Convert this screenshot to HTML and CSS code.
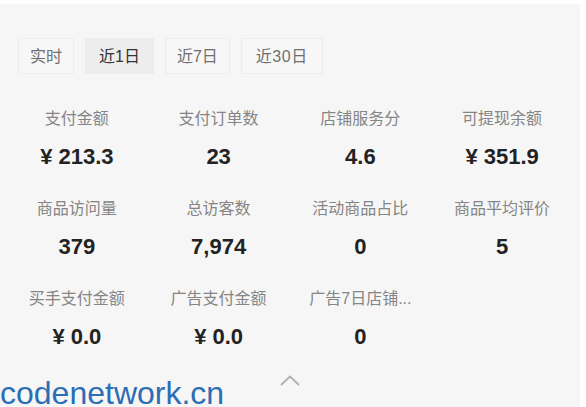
FILE: index.html
```html
<!DOCTYPE html>
<html lang="zh-CN">
<head>
<meta charset="utf-8">
<title>数据概览</title>
<link rel="stylesheet" href="styles.css">
</head>
<body>
<div class="card">
  <div class="tabs">
    <div class="tab">实时</div>
    <div class="tab active">近1日</div>
    <div class="tab">近7日</div>
    <div class="tab">近30日</div>
  </div>
  <div class="grid">
    <div class="cell"><div class="label">支付金额</div><div class="value">¥ 213.3</div></div>
    <div class="cell"><div class="label">支付订单数</div><div class="value">23</div></div>
    <div class="cell"><div class="label">店铺服务分</div><div class="value">4.6</div></div>
    <div class="cell"><div class="label">可提现余额</div><div class="value">¥ 351.9</div></div>
    <div class="cell"><div class="label">商品访问量</div><div class="value">379</div></div>
    <div class="cell"><div class="label">总访客数</div><div class="value">7,974</div></div>
    <div class="cell"><div class="label">活动商品占比</div><div class="value">0</div></div>
    <div class="cell"><div class="label">商品平均评价</div><div class="value">5</div></div>
    <div class="cell"><div class="label">买手支付金额</div><div class="value">¥ 0.0</div></div>
    <div class="cell"><div class="label">广告支付金额</div><div class="value">¥ 0.0</div></div>
    <div class="cell"><div class="label">广告7日店铺...</div><div class="value">0</div></div>
  </div>
  <div class="toggle">
    <svg width="20" height="11" viewBox="0 0 20 11"><polyline points="1,10 10,1.5 19,10" fill="none" stroke="#b0b0b0" stroke-width="1.8"/></svg>
  </div>
</div>
<div class="watermark">codenetwork.cn</div>
</body>
</html>
```

FILE: styles.css
```css
html, body {
  margin: 0;
  padding: 0;
  background: #ffffff;
  height: 100%;
  overflow: hidden;
}
body {
  font-family: "Liberation Sans", "Noto Sans CJK SC", sans-serif;
  position: relative;
}
.card {
  margin-top: 4px;
  width: 580px;
  height: 403px;
  background: #f6f6f6;
  box-sizing: border-box;
  padding-top: 34px;
}
.tabs {
  display: flex;
  gap: 11px;
  padding-left: 18px;
}
.tab {
  height: 36px;
  box-sizing: border-box;
  padding: 1px 11px 0;
  border: 1px solid #ececec;
  border-radius: 2px;
  background: #f7f7f7;
  color: #6f6f6f;
  font-size: 16px;
  line-height: 34px;
}
.tab.active {
  background: #ededed;
  color: #333333;
  padding: 1px 13px 0;
}
.tab:last-child {
  padding: 1px 14px 0;
  letter-spacing: 0.5px;
}
.grid {
  display: grid;
  grid-template-columns: repeat(4, 1fr);
  row-gap: 28px;
  margin-top: 35px;
  padding: 0 7px 0 6px;
}
.cell {
  display: flex;
  flex-direction: column;
  align-items: center;
}
.label {
  font-size: 16px;
  line-height: 20px;
  color: #858585;
  white-space: nowrap;
}
.value {
  margin-top: 14px;
  font-size: 22px;
  line-height: 28px;
  font-weight: bold;
  color: #222222;
}
.toggle {
  display: flex;
  justify-content: center;
  margin-top: 24px;
}
.watermark {
  position: absolute;
  left: 0;
  top: 375px;
  font-size: 32px;
  line-height: 36px;
  color: #2c6db4;
  font-family: "Liberation Sans", Arial, sans-serif;
}
```
